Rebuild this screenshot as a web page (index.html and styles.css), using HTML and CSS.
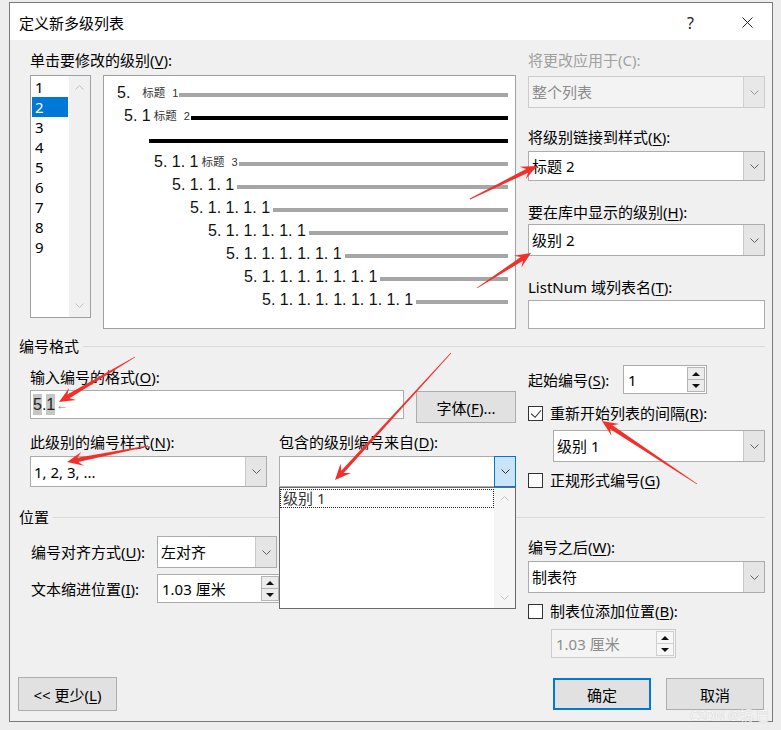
FILE: index.html
```html
<!DOCTYPE html>
<html lang="zh-CN">
<head>
  <meta charset="UTF-8">
  <title>定义新多级列表</title>
  <link rel="stylesheet" href="styles.css">
</head>
<body>

  <div class="dialog">
    <!-- Title bar -->
    <div class="titlebar">
      <span class="title">定义新多级列表</span>
      <span class="help">?</span>
      <svg class="close" viewBox="0 0 11 11"><path d="M.5 .5l10 10M10.5 .5l-10 10"/></svg>
    </div>

    <!-- Levels + preview -->
    <div class="sec top">
      <div class="col-left">
        <div class="lbl">单击要修改的级别(<u>V</u>):</div>
        <div class="level-row">
          <div class="levels">
            <div class="items">
              <div class="item">1</div>
              <div class="item sel">2</div>
              <div class="item">3</div>
              <div class="item">4</div>
              <div class="item">5</div>
              <div class="item">6</div>
              <div class="item">7</div>
              <div class="item">8</div>
              <div class="item">9</div>
            </div>
            <div class="vscroll">
              <svg class="chev light" viewBox="0 0 9 5"><path d="M.5 4.5l4-4 4 4"/></svg>
              <svg class="chev light" viewBox="0 0 9 5"><path d="M.5 .5l4 4 4-4"/></svg>
            </div>
          </div>
          <div class="preview" id="preview"></div>
        </div>
      </div>

      <div class="col-right">
        <div class="lbl off">将更改应用于(C):</div>
        <div class="combo off m6">
          <div class="val">整个列表</div>
          <div class="drop"><svg class="chev" viewBox="0 0 9 5"><path d="M.5 .5l4 4 4-4"/></svg></div>
        </div>
        <div class="lbl m19">将级别链接到样式(<u>K</u>):</div>
        <div class="combo h30 m4">
          <div class="val">标题 2</div>
          <div class="drop"><svg class="chev" viewBox="0 0 9 5"><path d="M.5 .5l4 4 4-4"/></svg></div>
        </div>
        <div class="lbl m21">要在库中显示的级别(<u>H</u>):</div>
        <div class="combo m2">
          <div class="val">级别 2</div>
          <div class="drop"><svg class="chev" viewBox="0 0 9 5"><path d="M.5 .5l4 4 4-4"/></svg></div>
        </div>
        <div class="lbl m21">ListNum 域列表名(<u>T</u>):</div>
        <div class="field m3"></div>
      </div>
    </div>

    <!-- Number format -->
    <div class="group">编号格式</div>
    <div class="sec fmt">
      <div class="col-left">
        <div class="lbl m11">输入编号的格式(<u>O</u>):</div>
        <div class="fmt-row m3">
          <div class="field fmt-input">
            <span class="shade">5</span>.<span class="shade">1</span><span class="para">&larr;</span>
          </div>
          <button class="btn font-btn">字体(<u>F</u>)...</button>
        </div>
        <div class="pair-grid m9">
          <div class="lbl">此级别的编号样式(<u>N</u>):</div>
          <div class="lbl">包含的级别编号来自(<u>D</u>):</div>
        </div>
        <div class="pair-grid m4">
          <div class="combo h31">
            <div class="val">1, 2, 3, ...</div>
            <div class="drop"><svg class="chev" viewBox="0 0 9 5"><path d="M.5 .5l4 4 4-4"/></svg></div>
          </div>
          <div class="dropdown-wrap">
            <div class="combo h31 focus">
              <div class="val"></div>
              <div class="drop"><svg class="chev dark" viewBox="0 0 9 5"><path d="M.5 .5l4 4 4-4"/></svg></div>
            </div>
            <div class="dropdown-list">
              <div class="opts">
                <div class="opt">级别 1</div>
              </div>
              <div class="vscroll list">
                <svg class="chev light" viewBox="0 0 9 5"><path d="M.5 4.5l4-4 4 4"/></svg>
                <svg class="chev light" viewBox="0 0 9 5"><path d="M.5 .5l4 4 4-4"/></svg>
              </div>
            </div>
          </div>
        </div>
      </div>

      <div class="col-right">
        <div class="start-row m9">
          <div class="slbl">起始编号(<u>S</u>):</div>
          <div class="spin w-start">
            <div class="val">1</div>
            <div class="btns"><span><i class="up"></i></span><span><i class="down"></i></span></div>
          </div>
        </div>
        <div class="check-row m9">
          <span class="chk"><svg viewBox="0 0 14 14"><path d="M2.3 7.3l4.3 3.8 6.4-7.6"/></svg></span>
          <span>重新开始列表的间隔(<u>R</u>):</span>
        </div>
        <div class="combo w-restart m7">
          <div class="val">级别 1</div>
          <div class="drop"><svg class="chev" viewBox="0 0 9 5"><path d="M.5 .5l4 4 4-4"/></svg></div>
        </div>
        <div class="check-row m8">
          <span class="chk"></span>
          <span>正规形式编号(<u>G</u>)</span>
        </div>
      </div>
    </div>

    <!-- Position -->
    <div class="group pos-group">位置</div>
    <div class="sec pos">
      <div class="col-left">
        <div class="pair m9">
          <div class="plbl">编号对齐方式(<u>U</u>):</div>
          <div class="combo w-align">
            <div class="val">左对齐</div>
            <div class="drop"><svg class="chev" viewBox="0 0 9 5"><path d="M.5 .5l4 4 4-4"/></svg></div>
          </div>
        </div>
        <div class="pair m6">
          <div class="plbl">文本缩进位置(<u>I</u>):</div>
          <div class="spin w-indent">
            <div class="val">1.03 厘米</div>
            <div class="btns"><span><i class="up"></i></span><span><i class="down"></i></span></div>
          </div>
        </div>
      </div>

      <div class="col-right">
        <div class="lbl m10">编号之后(<u>W</u>):</div>
        <div class="combo m4">
          <div class="val">制表符</div>
          <div class="drop"><svg class="chev" viewBox="0 0 9 5"><path d="M.5 .5l4 4 4-4"/></svg></div>
        </div>
        <div class="check-row m8">
          <span class="chk"></span>
          <span>制表位添加位置(<u>B</u>):</span>
        </div>
        <div class="spin off w-tab m8">
          <div class="val">1.03 厘米</div>
          <div class="btns"><span><i class="up"></i></span><span><i class="down"></i></span></div>
        </div>
      </div>
    </div>

    <!-- Buttons -->
    <div class="footer">
      <button class="btn less-btn">&lt;&lt; 更少(<u>L</u>)</button>
      <div class="footer-right">
        <button class="btn default">确定</button>
        <button class="btn">取消</button>
      </div>
    </div>
  </div>

  <!-- Red annotation arrows drawn over the screenshot -->
  <svg class="marks" id="marks" viewBox="0 0 781 730"></svg>
  <div class="watermark">CSDN @锅.巴</div>

  <script>
  // preview rows: indent, number text, caption, bar style
  const rows = [
    { indent: 13, num: "5.\u00a0\u00a0", cap: "1" },
    { indent: 20, num: "5. 1", cap: "2", dark: true },
    { indent: 45, dark: true },
    { indent: 50, num: "5. 1. 1", cap: "3" },
    { indent: 68, num: "5. 1. 1. 1" },
    { indent: 86, num: "5. 1. 1. 1. 1" },
    { indent: 104, num: "5. 1. 1. 1. 1. 1" },
    { indent: 122, num: "5. 1. 1. 1. 1. 1. 1" },
    { indent: 140, num: "5. 1. 1. 1. 1. 1. 1. 1" },
    { indent: 158, num: "5. 1. 1. 1. 1. 1. 1. 1. 1" }
  ];

  const preview = document.getElementById("preview");
  rows.forEach(r => {
    const row = document.createElement("div");
    row.className = "pv-row";
    row.style.paddingLeft = r.indent + "px";
    let html = "";
    if (r.num) html += `<span class="num">${r.num}</span>`;
    if (r.cap) html += `<span class="cap">标题<span class="lv">${r.cap}</span></span>`;
    html += `<span class="bar${r.dark ? " dark" : ""}"></span>`;
    row.innerHTML = html;
    preview.appendChild(row);
  });

  // arrows: tail x, tail y, tip x, tip y, shaft width
  const arrows = [
    [470, 199, 537, 166, 2.2],
    [477, 288, 531, 253, 2.2],
    [135, 357, 59, 402, 2.2],
    [148, 446, 67, 462, 2.2],
    [451, 353, 335, 480, 1.7],
    [697, 484, 602, 421, 2.2]
  ];

  const marks = document.getElementById("marks");
  arrows.forEach(([tx, ty, px, py, sw]) => {
    const len = Math.hypot(px - tx, py - ty);
    const dx = (px - tx) / len, dy = (py - ty) / len;
    const nx = -dy, ny = dx;
    const pt = (along, side) =>
      (px - dx * along + nx * side).toFixed(1) + "," + (py - dy * along + ny * side).toFixed(1);
    const tail = (side) => (tx + nx * side).toFixed(1) + "," + (ty + ny * side).toFixed(1);
    const pts = [tail(0.4), pt(11, sw), pt(16, 7), pt(0, 0), pt(16, -7), pt(11, -sw), tail(-0.4)];
    const poly = document.createElementNS("http://www.w3.org/2000/svg", "polygon");
    poly.setAttribute("points", pts.join(" "));
    marks.appendChild(poly);
  });
  </script>

</body>
</html>
```

FILE: styles.css
```css
body {
  margin: 0;
  background: #ededed;
  font-family: "Noto Sans", "Noto Sans CJK SC", sans-serif;
  font-size: 15px;
  line-height: 20px;
  color: #000;
}

u {
  text-decoration-thickness: 1px;
  text-underline-offset: 2px;
}

.dialog {
  position: relative;
  width: 764px;
  height: 720px;
  margin: 2px 0 0 9px;
  box-sizing: border-box;
  border: 1px solid #7a7a7a;
  background: #f0f0f0;
}

/* title bar */
.titlebar {
  display: flex;
  align-items: center;
  height: 37px;
  padding: 2px 19px 0 9px;
  box-sizing: border-box;
  background: #fff;
}

.titlebar .title {
  flex: 1;
}

.titlebar .help {
  margin-right: 48px;
  font-size: 16px;
  color: #222;
}

.close {
  width: 11px;
  height: 11px;
  stroke: #222;
  stroke-width: 1;
  fill: none;
}

/* sections */
.sec {
  display: flex;
  padding-left: 20px;
}

.sec.top {
  padding-top: 10px;
}

.col-left {
  width: 486px;
}

.col-right {
  width: 237px;
  margin-left: 12px;
}

.lbl {
  height: 20px;
  white-space: nowrap;
}

.lbl.off {
  color: #a0a0a0;
}

.m2 { margin-top: 2px; }
.m3 { margin-top: 3px; }
.m4 { margin-top: 4px; }
.m6 { margin-top: 6px; }
.m7 { margin-top: 7px; }
.m8 { margin-top: 8px; }
.m9 { margin-top: 9px; }
.m10 { margin-top: 10px; }
.m11 { margin-top: 11px; }
.m19 { margin-top: 19px; }
.m21 { margin-top: 21px; }

.group {
  display: flex;
  align-items: center;
  height: 20px;
  margin-top: 7px;
  padding: 0 7px 0 9px;
}

.group::after {
  content: "";
  flex: 1;
  height: 1px;
  margin-left: 4px;
  background: #dadada;
}

.group.pos-group {
  margin-top: 17px;
}

/* level list */
.level-row {
  display: flex;
  align-items: flex-start;
  margin-top: 5px;
}

.levels {
  display: flex;
  width: 61px;
  height: 243px;
  box-sizing: border-box;
  border: 1px solid #a0a0a0;
  background: #fff;
}

.levels .items {
  flex: 1;
  padding: 1px 1px 0 1px;
}

.levels .item {
  height: 20px;
  padding-left: 3px;
}

.levels .item.sel {
  background: #0078d7;
  color: #fff;
}

.vscroll {
  display: flex;
  flex-direction: column;
  justify-content: space-between;
  align-items: center;
  width: 21px;
  padding: 9px 0;
  box-sizing: border-box;
  background: #f0f0f0;
}

.chev {
  width: 9px;
  height: 5px;
  fill: none;
  stroke: #606060;
  stroke-width: 1;
}

.chev.light {
  stroke: #c2c2c2;
}

.chev.dark {
  stroke: #333;
}

/* preview */
.preview {
  width: 413px;
  height: 254px;
  margin-left: 12px;
  padding: 5px 7px 0 0;
  box-sizing: border-box;
  border: 1px solid #a0a0a0;
  background: #fff;
}

.pv-row {
  display: flex;
  align-items: center;
  height: 23px;
  white-space: nowrap;
}

.pv-row .num {
  font-family: "Liberation Sans", Arial, sans-serif;
  font-size: 16px;
  color: #111;
}

.pv-row .cap {
  margin: 0 1px 0 3px;
  font-family: "Noto Sans CJK SC", sans-serif;
  font-size: 11.5px;
  color: #333;
}

.cap .lv {
  margin-left: 7px;
  font-family: "Liberation Sans", Arial, sans-serif;
  font-size: 11px;
}

.bar {
  flex: 1;
  height: 4px;
  margin-top: 5px;
  background: #a6a6a6;
}

.num + .bar {
  margin-left: 3px;
}

.bar.dark {
  background: #000;
}

/* controls */
.combo {
  display: flex;
  height: 32px;
  box-sizing: border-box;
  border: 1px solid #acacac;
  background: #fff;
}

.combo.h30 { height: 30px; }
.combo.h31 { height: 31px; }

.combo .val {
  flex: 1;
  display: flex;
  align-items: center;
  padding-left: 3px;
  white-space: nowrap;
}

.combo .drop {
  display: flex;
  align-items: center;
  justify-content: center;
  width: 20px;
  border-left: 1px solid #c8c8c8;
  background: #e5e5e5;
}

.combo.off {
  border-color: #cccccc;
  background: #f3f3f3;
  color: #8c8c8c;
}

.combo.off .drop {
  border-left-color: #d0d0d0;
  background: #e8e8e8;
}

.combo.off .chev {
  stroke: #9a9a9a;
}

.combo.focus .drop {
  margin: -1px -1px -1px 0;
  border: 1px solid #0078d7;
  background: #cce4f7;
}

.field {
  height: 29px;
  box-sizing: border-box;
  border: 1px solid #acacac;
  background: #fff;
}

.fmt-row {
  display: flex;
  align-items: flex-start;
}

.fmt-input {
  display: flex;
  align-items: center;
  width: 374px;
  padding-left: 2px;
  font-family: "Liberation Sans", Arial, sans-serif;
  font-size: 16px;
  color: #222;
}

.fmt-input .shade {
  background: #c6c6c6;
  line-height: 21px;
}

.fmt-input .para {
  margin-left: 1px;
  font-size: 12px;
  color: #8a8a8a;
}

.btn {
  height: 32px;
  box-sizing: border-box;
  border: 1px solid #adadad;
  background: #e1e1e1;
  font-family: inherit;
  font-size: 15px;
  color: #000;
  padding: 0;
}

.font-btn {
  width: 100px;
  margin: 1px 0 0 12px;
}

.pair-grid {
  display: grid;
  grid-template-columns: 237px 237px;
  column-gap: 12px;
}

.dropdown-wrap {
  position: relative;
}

.dropdown-list {
  position: absolute;
  top: 100%;
  left: 0;
  z-index: 2;
  display: flex;
  width: 237px;
  height: 122px;
  box-sizing: border-box;
  border: 1px solid #6a6a6a;
  background: #fff;
}

.dropdown-list .opts {
  flex: 1;
  padding-top: 1px;
}

.opt {
  height: 19px;
  box-sizing: border-box;
  border: 1px dotted #222;
  padding-left: 2px;
  line-height: 17px;
  color: #333;
}

.vscroll.list {
  padding: 8px 0;
  background: #f5f5f5;
}

/* start number spinner */
.start-row {
  display: flex;
}

.slbl {
  width: 95px;
  display: flex;
  align-items: center;
  white-space: nowrap;
}

.spin {
  display: flex;
  height: 29px;
  box-sizing: border-box;
  border: 1px solid #acacac;
  background: #fff;
}

.spin .val {
  flex: 1;
  display: flex;
  align-items: center;
  padding-left: 4px;
  white-space: nowrap;
}

.spin .btns {
  display: flex;
  flex-direction: column;
  width: 18px;
  margin: 1px 1px 1px 0;
}

.spin .btns span {
  flex: 1;
  display: flex;
  align-items: center;
  justify-content: center;
  border: 1px solid #b4b4b4;
  background: #ececec;
}

.spin .btns span + span {
  border-top: none;
}

.btns .up,
.btns .down {
  width: 0;
  height: 0;
  border-left: 4px solid transparent;
  border-right: 4px solid transparent;
}

.btns .up {
  border-bottom: 4px solid #111;
}

.btns .down {
  border-top: 4px solid #111;
}

.w-start { width: 84px; }
.w-align { width: 120px; }
.w-indent { width: 124px; }

.w-restart {
  margin-left: 25px;
}

.spin.off {
  width: 125px;
  margin-left: 23px;
  border-color: #cccccc;
  background: #f4f4f4;
  color: #8d8d8d;
}

.spin.off .btns span {
  border-color: #cfcfcf;
  background: #f7f7f7;
}

.check-row {
  display: flex;
  align-items: center;
  gap: 7px;
  height: 20px;
  white-space: nowrap;
}

.chk {
  width: 15px;
  height: 15px;
  box-sizing: border-box;
  border: 1px solid #333;
  background: #fff;
}

.chk svg {
  display: block;
  width: 13px;
  height: 13px;
  fill: none;
  stroke: #333;
  stroke-width: 1.2;
}

/* position */
.pair {
  display: flex;
  align-items: center;
}

.plbl {
  width: 127px;
  padding-left: 1px;
  box-sizing: border-box;
  white-space: nowrap;
}

/* footer */
.footer {
  display: flex;
  justify-content: space-between;
  align-items: flex-start;
  margin-top: 19px;
  padding: 0 8px;
}

.less-btn {
  width: 99px;
  height: 34px;
}

.footer-right {
  display: flex;
  gap: 15px;
  margin-top: 1px;
}

.footer-right .btn {
  width: 98px;
}

.btn.default {
  border: 2px solid #0078d7;
}

/* overlays */
.marks {
  position: absolute;
  top: 0;
  left: 0;
  width: 781px;
  height: 730px;
  pointer-events: none;
  fill: #f2302a;
}

.watermark {
  position: absolute;
  left: 690px;
  top: 705px;
  font-size: 13px;
  color: rgba(255, 255, 255, 0.9);
  text-shadow: 0 0 1px rgba(0, 0, 0, 0.25);
}
```
